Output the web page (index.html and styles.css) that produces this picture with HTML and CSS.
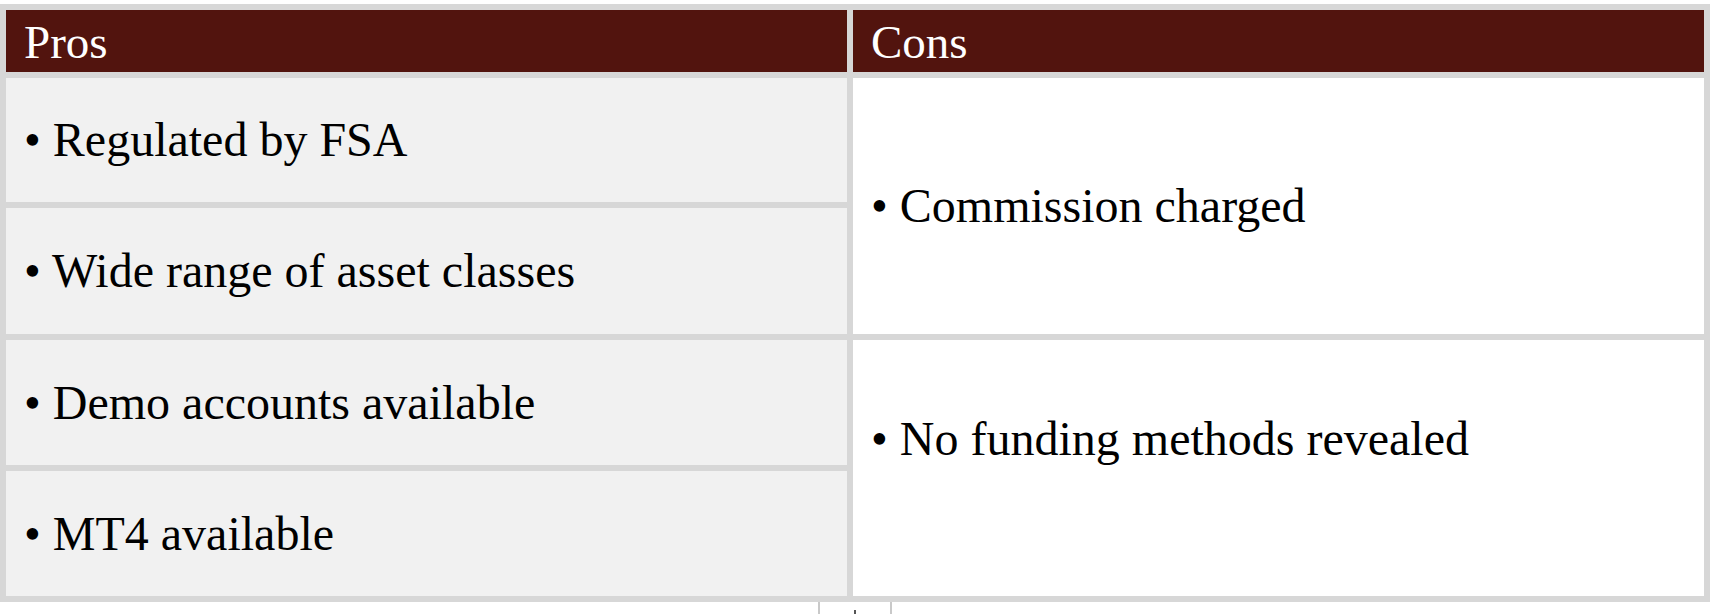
FILE: index.html
```html
<!DOCTYPE html>
<html lang="en">
<head>
<meta charset="utf-8">
<title>Pros and Cons</title>
<link rel="stylesheet" href="styles.css">
</head>
<body>
<table class="pc-table">
  <colgroup>
    <col class="col-pros">
    <col class="col-cons">
  </colgroup>
  <thead>
    <tr class="head-row">
      <th class="head-cell">Pros</th>
      <th class="head-cell">Cons</th>
    </tr>
  </thead>
  <tbody>
    <tr class="row row-1">
      <td class="pro">• Regulated by FSA</td>
      <td class="con" rowspan="2">• Commission charged</td>
    </tr>
    <tr class="row row-2">
      <td class="pro">• Wide range of asset classes</td>
    </tr>
    <tr class="row row-3">
      <td class="pro">• Demo accounts available</td>
      <td class="con con-raised" rowspan="2">• No funding methods revealed</td>
    </tr>
    <tr class="row row-4">
      <td class="pro">• MT4 available</td>
    </tr>
  </tbody>
</table>
<div class="stub"><span class="stub-mark"></span></div>
</body>
</html>
```

FILE: styles.css
```css
html, body {
  margin: 0;
  padding: 0;
  background: #ffffff;
}

body {
  font-family: "Liberation Serif", "Times New Roman", serif;
  color: #000000;
}

.pc-table {
  margin-top: 4px;
  width: 1710px;
  table-layout: fixed;
  border-collapse: separate;
  border-spacing: 6px;
  background: #d7d7d7;
}

.col-pros { width: 841px; }
.col-cons { width: 851px; }

.head-row { height: 62px; }

.head-cell {
  background: #52140e;
  color: #ffffff;
  font-weight: normal;
  font-size: 47px;
  text-align: left;
  padding: 3px 18px 0;
  vertical-align: middle;
  line-height: 1;
}

.row-1 { height: 124px; }
.row-2 { height: 126px; }
.row-3 { height: 125px; }
.row-4 { height: 125px; }

.pro, .con {
  font-size: 48px;
  padding: 0 18px;
  vertical-align: middle;
  line-height: 1.15;
}

.pro { background: #f1f1f1; }
.con { background: #ffffff; }

.con-raised { padding-bottom: 58px; }

.stub {
  margin-left: 818px;
  width: 70px;
  height: 12px;
  border-left: 2px solid #c9c9c9;
  border-right: 2px solid #c9c9c9;
  display: flex;
  justify-content: center;
  align-items: flex-end;
}

.stub-mark {
  width: 2px;
  height: 4px;
  background: #555555;
}
```
